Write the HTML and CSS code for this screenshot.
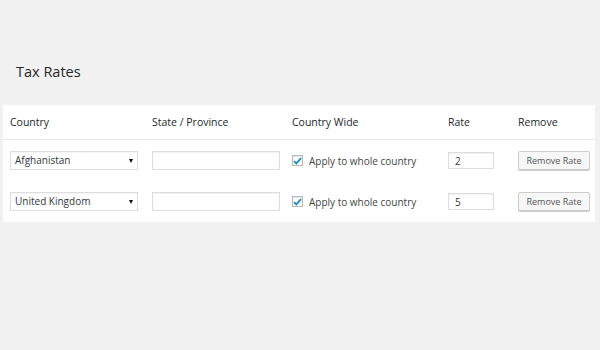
FILE: index.html
```html
<!DOCTYPE html>
<html lang="en">
<head>
  <meta charset="UTF-8" />
  <title>Tax Rates</title>
  <link rel="stylesheet" href="styles.css">
</head>
<body>
  <div class="wrap">
    <h2 class="page-title">Tax Rates</h2>

    <table class="rates">
      <thead>
        <tr>
          <th class="col-country">Country</th>
          <th class="col-state">State / Province</th>
          <th class="col-wide">Country Wide</th>
          <th class="col-rate">Rate</th>
          <th class="col-remove">Remove</th>
        </tr>
      </thead>
      <tbody>
        <tr>
          <td><div class="select">Afghanistan<span class="arrow"></span></div></td>
          <td><input class="text-field state" type="text" /></td>
          <td>
            <label class="check">
              <span class="box"><svg width="9" height="8" viewBox="0 0 9 8"><path d="M1 4.2 L3.4 6.4 L8 1.2" fill="none" stroke="#1e8cbe" stroke-width="1.8"/></svg></span>
              Apply to whole country
            </label>
          </td>
          <td><input class="text-field rate" type="text" value="2" /></td>
          <td><button class="button">Remove Rate</button></td>
        </tr>
        <tr>
          <td><div class="select">United Kingdom<span class="arrow"></span></div></td>
          <td><input class="text-field state" type="text" /></td>
          <td>
            <label class="check">
              <span class="box"><svg width="9" height="8" viewBox="0 0 9 8"><path d="M1 4.2 L3.4 6.4 L8 1.2" fill="none" stroke="#1e8cbe" stroke-width="1.8"/></svg></span>
              Apply to whole country
            </label>
          </td>
          <td><input class="text-field rate" type="text" value="5" /></td>
          <td><button class="button">Remove Rate</button></td>
        </tr>
      </tbody>
    </table>
  </div>
</body>
</html>
```

FILE: styles.css
```css
html, body {
  margin: 0;
  padding: 0;
  background: #f1f1f1;
  color: #32373c;
  font-family: "Open Sans", sans-serif;
  font-size: 10px;
}

.wrap {
  padding: 61px 5px 0 3px;
}

/* title */
.page-title {
  margin: 0 0 22px;
  padding-left: 13px;
  font-size: 14.5px;
  font-weight: 400;
  line-height: 22px;
  color: #23282d;
}

/* table */
.rates {
  width: 592px;
  border-collapse: collapse;
  background: #fff;
}
.rates th {
  height: 34px;
  padding: 0 0 0 7px;
  text-align: left;
  font-size: 10.5px;
  font-weight: 400;
  color: #23282d;
  border-bottom: 1px solid #e8e8e8;
}
.rates td {
  height: 41px;
  padding: 0 0 0 7px;
  vertical-align: middle;
}
.col-country { width: 135px; }
.col-state { width: 133px; }
.col-wide { width: 149px; }
.col-rate { width: 63px; }

/* fields */
.select {
  position: relative;
  box-sizing: border-box;
  width: 128px;
  height: 19px;
  padding-left: 4px;
  line-height: 17px;
  border: 1px solid #ddd;
  color: #32373c;
  box-shadow: inset 0 1px 1px rgba(0,0,0,0.04);
}
.select .arrow {
  position: absolute;
  right: 4px;
  top: 7px;
  border-left: 2.5px solid transparent;
  border-right: 2.5px solid transparent;
  border-top: 4px solid #111;
}
.text-field {
  display: block;
  box-sizing: border-box;
  margin: 0;
  height: 19px;
  padding: 0 6px;
  border: 1px solid #ddd;
  box-shadow: inset 0 1px 2px rgba(0,0,0,0.06);
  font-family: "Open Sans", sans-serif;
  font-size: 10px;
  color: #32373c;
  outline: none;
}
.text-field.state { width: 128px; }
.text-field.rate { width: 46px; height: 17px; }

/* checkbox */
.check {
  display: flex;
  align-items: center;
  gap: 6px;
  color: #444;
}
.check .box {
  box-sizing: border-box;
  width: 11px;
  height: 11px;
  border: 1px solid #b4b9be;
  display: flex;
  align-items: center;
  justify-content: center;
  box-shadow: inset 0 1px 2px rgba(0,0,0,0.1);
}

/* button */
.button {
  box-sizing: border-box;
  width: 72px;
  height: 19px;
  padding: 0;
  border: 1px solid #ccc;
  border-radius: 2px;
  background: #f7f7f7;
  box-shadow: 0 1px 0 #ccc;
  font-family: "Open Sans", sans-serif;
  font-size: 9px;
  color: #555;
}
```
